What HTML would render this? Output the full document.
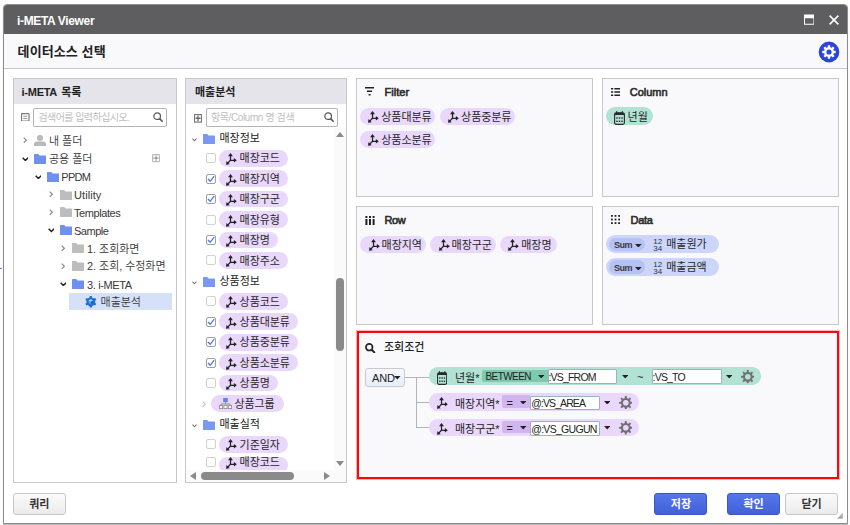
<!DOCTYPE html>
<html lang="ko"><head><meta charset="utf-8"><title>i-META Viewer</title>
<style>
html,body{margin:0;padding:0;background:#fff;}
body{width:850px;height:525px;position:relative;overflow:hidden;font-family:"Liberation Sans", "Noto Sans CJK KR", sans-serif;font-size:11px;color:#333;}
.ab{position:absolute;}
.t{position:absolute;white-space:nowrap;line-height:16px;height:16px;}
.k{letter-spacing:-0.05px;}
.l{letter-spacing:-0.5px;}
.lt{position:relative;top:0.4px;}
#frame{left:3px;top:4px;width:843px;height:518px;border:1px solid #8c8c8c;border-radius:4px 4px 0 0;background:#fff;box-shadow:0 1px 1px rgba(0,0,0,.3);overflow:hidden;}
#frame .tbg{position:absolute;left:0;top:0;width:843px;height:29px;background:#5e5e60;}
#frame .sbg{position:absolute;left:0;top:29px;width:843px;height:34px;background:#f9f9fb;border-bottom:1px solid #c6c6c6;}
#dlg{left:4px;top:5px;width:843px;height:518px;}
#tb{left:0;top:0;width:843px;height:29px;}
#sh{left:0;top:29px;width:843px;height:34px;}
.pn{border:1px solid #c8c8c8;background:#fff;box-sizing:border-box;}
.pn2{border:1px solid #c8c8c8;background:#f9f9fc;box-sizing:border-box;}
.ph{left:0;top:0;right:0;height:25px;background:#e4e4ea;}
.inp{border:1px solid #b4b4b4;border-radius:2px;background:#fff;box-sizing:border-box;}
.pill{position:absolute;border-radius:9px;height:17px;box-sizing:border-box;}
.pu{background:#e9d8fb;}
.gr{background:#b2e2d3;}
.bl{background:#ccd5fb;}
.cb{width:10px;height:10px;box-sizing:border-box;border:1px solid #d0d0d0;border-radius:2px;background:#fff;}
.cb.on{border-color:#a0a0a0;}
.btn{position:absolute;box-sizing:border-box;border-radius:3px;height:22px;line-height:21.4px;text-align:center;font-weight:bold;font-size:11px;letter-spacing:0;}
.bb{background:linear-gradient(#5577ea,#4360d8);border:1px solid #3a55c4;color:#fff;}
.bg{background:linear-gradient(#fbfbfb,#ebebeb);border:1px solid #c6c6c6;color:#333;}
.pt{font-weight:400;font-size:11px;color:#2c2c2c;-webkit-text-stroke:0.6px #2c2c2c;}
.ph .t{font-weight:bold;font-size:11px;color:#222;}
.ptxt{color:#262626;font-weight:400;}
</style></head><body>
<div class="ab" style="left:0;top:268px;width:2px;height:1px;background:#7a7af2"></div>
<div id="frame" class="ab"><div class="tbg"></div><div class="sbg"></div></div>
<div id="dlg" class="ab">
<div id="tb" class="ab"><div class="t" style="left:13px;top:7.5px;color:#fff;font-weight:bold;font-size:12px;letter-spacing:-0.35px">i-META Viewer</div>
<svg class="ab" style="left:800px;top:9.4px" width="10.4" height="11.2" viewBox="0 0 11 11"><path fill="#fff" fill-rule="evenodd" d="M0 0H11V11H0ZM1 4V10H10V4Z"/></svg>
<svg class="ab" style="left:825px;top:10px" width="10" height="10" viewBox="0 0 10 10"><path stroke="#fff" stroke-width="1.5" fill="none" d="M0.6 0.6L9.4 9.4M9.4 0.6L0.6 9.4"/></svg>
</div>
<div id="sh" class="ab"><div class="t k" style="left:13.6px;top:9.6px;font-size:13px;font-weight:bold;color:#222;letter-spacing:0.1px">데이터소스 선택</div>
<svg class="ab" style="left:813.5px;top:6.5px" width="22" height="22" viewBox="-0.5 -0.5 22 22"><circle cx="10.5" cy="10.5" r="11" fill="#fff"/><circle cx="10.5" cy="10.5" r="10.4" fill="#2a45d8"/><path fill="#fff" fill-rule="evenodd" d="M9.33 3.80L11.67 3.80L11.74 5.66L13.05 6.20L14.41 4.94L16.06 6.59L14.80 7.95L15.34 9.26L17.20 9.33L17.20 11.67L15.34 11.74L14.80 13.05L16.06 14.41L14.41 16.06L13.05 14.80L11.74 15.34L11.67 17.20L9.33 17.20L9.26 15.34L7.95 14.80L6.59 16.06L4.94 14.41L6.20 13.05L5.66 11.74L3.80 11.67L3.80 9.33L5.66 9.26L6.20 7.95L4.94 6.59L6.59 4.94L7.95 6.20L9.26 5.66ZM7.90 10.50a2.6 2.6 0 1 0 5.2 0a2.6 2.6 0 1 0 -5.2 0Z"/></svg>
</div>

<div class="ab pn" style="left:9px;top:73px;width:164px;height:405px">
<div class="ab ph"><div class="t" style="left:7.6px;top:5.2px"><span style="letter-spacing:-0.28px">i-META</span></div><div class="t" style="left:47.2px;top:5.2px">목록</div></div>
<svg class="ab" style="left:7.2px;top:33.5px" width="8.6" height="8.6" viewBox="0 0 9 9"><rect x="0.6" y="0.6" width="7.8" height="7.8" rx="0.5" fill="#fff" stroke="#7a7a7a" stroke-width="1.2"/><path stroke="#808080" stroke-width="0.9" d="M2.4 3.4H6.6M2.4 5.8H6.6" fill="none"/></svg>
<div class="ab inp" style="left:19px;top:29px;width:134px;height:19px"><div class="t k" style="left:4.4px;top:1px;font-size:10px;color:#bdbdbd;letter-spacing:-0.55px">검색어를 입력하십시오.</div><svg class="ab" style="left:119px;top:3.4px" width="10.4" height="10.4" viewBox="0 0 11 11"><circle cx="4.4" cy="4.4" r="3.5" fill="none" stroke="#555" stroke-width="1.3"/><path d="M7 7L10.2 10.2" stroke="#555" stroke-width="1.6"/></svg></div>
<div class="ab" style="left:55px;top:214.4px;width:102.6px;height:16.6px;background:#d6e0f8"></div>
<svg class="ab" style="left:9px;top:58.4px" width="4.2" height="6.5" viewBox="0 0 5 8"><path fill="none" stroke="#8c8c8c" stroke-width="1.45" d="M0.8 0.8L4 4L0.8 7.2"/></svg>
<svg class="ab" style="left:20px;top:55.6px" width="12" height="11" viewBox="0 0 12 11"><circle cx="6" cy="3" r="3" fill="#b9b9b9"/><path d="M0 11V9.2Q0 6.6 3.2 6.6H8.8Q12 6.6 12 9.2V11Z" fill="#b9b9b9"/></svg>
<div class="t k" style="left:35px;top:54.1px;color:#383838;font-weight:350">내 폴더</div>
<svg class="ab" style="left:7.6px;top:77.7px" width="6.8" height="4.3" viewBox="0 0 8 5"><path fill="none" stroke="#222" stroke-width="1.8" d="M0.8 0.8L4 4L7.2 0.8"/></svg>
<svg class="ab" style="left:19.6px;top:74.7px" width="12" height="10" viewBox="0 0 12 10"><path fill="#7090f0" d="M0 0.6Q0 0 0.6 0H4.2L5.6 1.6H11.4Q12 1.6 12 2.2V9.4Q12 10 11.4 10H0.6Q0 10 0 9.4Z"/></svg>
<div class="t k" style="left:35px;top:72.0px;color:#383838;font-weight:350">공용 폴더</div>
<svg class="ab" style="left:20.6px;top:95.6px" width="6.8" height="4.3" viewBox="0 0 8 5"><path fill="none" stroke="#222" stroke-width="1.8" d="M0.8 0.8L4 4L7.2 0.8"/></svg>
<svg class="ab" style="left:32.6px;top:92.6px" width="12" height="10" viewBox="0 0 12 10"><path fill="#7090f0" d="M0 0.6Q0 0 0.6 0H4.2L5.6 1.6H11.4Q12 1.6 12 2.2V9.4Q12 10 11.4 10H0.6Q0 10 0 9.4Z"/></svg>
<div class="t k" style="left:47.3px;top:89.9px;color:#383838;font-weight:350"><span class="lt"><span style="letter-spacing:-0.75px">PPDM</span></span></div>
<svg class="ab" style="left:34.5px;top:112.1px" width="4.2" height="6.5" viewBox="0 0 5 8"><path fill="none" stroke="#8c8c8c" stroke-width="1.45" d="M0.8 0.8L4 4L0.8 7.2"/></svg>
<svg class="ab" style="left:45.6px;top:110.5px" width="12" height="10" viewBox="0 0 12 10"><path fill="#bdbdbd" d="M0 0.6Q0 0 0.6 0H4.2L5.6 1.6H11.4Q12 1.6 12 2.2V9.4Q12 10 11.4 10H0.6Q0 10 0 9.4Z"/></svg>
<div class="t k" style="left:60px;top:107.8px;color:#383838;font-weight:350"><span class="lt"><span style="letter-spacing:0.07px">Utility</span></span></div>
<svg class="ab" style="left:34.5px;top:130.0px" width="4.2" height="6.5" viewBox="0 0 5 8"><path fill="none" stroke="#8c8c8c" stroke-width="1.45" d="M0.8 0.8L4 4L0.8 7.2"/></svg>
<svg class="ab" style="left:45.6px;top:128.4px" width="12" height="10" viewBox="0 0 12 10"><path fill="#bdbdbd" d="M0 0.6Q0 0 0.6 0H4.2L5.6 1.6H11.4Q12 1.6 12 2.2V9.4Q12 10 11.4 10H0.6Q0 10 0 9.4Z"/></svg>
<div class="t k" style="left:60px;top:125.7px;color:#383838;font-weight:350"><span class="lt"><span style="letter-spacing:-0.42px">Templates</span></span></div>
<svg class="ab" style="left:33.6px;top:149.3px" width="6.8" height="4.3" viewBox="0 0 8 5"><path fill="none" stroke="#222" stroke-width="1.8" d="M0.8 0.8L4 4L7.2 0.8"/></svg>
<svg class="ab" style="left:45.6px;top:146.3px" width="12" height="10" viewBox="0 0 12 10"><path fill="#7090f0" d="M0 0.6Q0 0 0.6 0H4.2L5.6 1.6H11.4Q12 1.6 12 2.2V9.4Q12 10 11.4 10H0.6Q0 10 0 9.4Z"/></svg>
<div class="t k" style="left:60px;top:143.6px;color:#383838;font-weight:350"><span class="lt"><span style="letter-spacing:-0.48px">Sample</span></span></div>
<svg class="ab" style="left:47px;top:165.8px" width="4.2" height="6.5" viewBox="0 0 5 8"><path fill="none" stroke="#8c8c8c" stroke-width="1.45" d="M0.8 0.8L4 4L0.8 7.2"/></svg>
<svg class="ab" style="left:58.2px;top:164.2px" width="12" height="10" viewBox="0 0 12 10"><path fill="#bdbdbd" d="M0 0.6Q0 0 0.6 0H4.2L5.6 1.6H11.4Q12 1.6 12 2.2V9.4Q12 10 11.4 10H0.6Q0 10 0 9.4Z"/></svg>
<div class="t k" style="left:73px;top:161.5px;color:#383838;font-weight:350">1. 조회화면</div>
<svg class="ab" style="left:47px;top:183.7px" width="4.2" height="6.5" viewBox="0 0 5 8"><path fill="none" stroke="#8c8c8c" stroke-width="1.45" d="M0.8 0.8L4 4L0.8 7.2"/></svg>
<svg class="ab" style="left:58.2px;top:182.1px" width="12" height="10" viewBox="0 0 12 10"><path fill="#bdbdbd" d="M0 0.6Q0 0 0.6 0H4.2L5.6 1.6H11.4Q12 1.6 12 2.2V9.4Q12 10 11.4 10H0.6Q0 10 0 9.4Z"/></svg>
<div class="t k" style="left:73px;top:179.4px;color:#383838;font-weight:350">2. 조회, 수정화면</div>
<svg class="ab" style="left:45.6px;top:203.0px" width="6.8" height="4.3" viewBox="0 0 8 5"><path fill="none" stroke="#222" stroke-width="1.8" d="M0.8 0.8L4 4L7.2 0.8"/></svg>
<svg class="ab" style="left:58.2px;top:200.0px" width="12" height="10" viewBox="0 0 12 10"><path fill="#7090f0" d="M0 0.6Q0 0 0.6 0H4.2L5.6 1.6H11.4Q12 1.6 12 2.2V9.4Q12 10 11.4 10H0.6Q0 10 0 9.4Z"/></svg>
<div class="t k" style="left:73px;top:197.3px;color:#383838;font-weight:350"><span class="lt"><span style="letter-spacing:-0.36px">3. i-META</span></span></div>
<svg class="ab" style="left:138px;top:75.4px" width="8.2" height="8.2" viewBox="0 0 8 8"><rect x="0.6" y="0.6" width="6.8" height="6.8" rx="0.6" fill="#fff" stroke="#bcbcbc" stroke-width="1.2"/><path stroke="#b4b4b4" stroke-width="1.2" d="M4 0.6V7.4M0.6 4H7.4" fill="none"/><rect x="3.2" y="3.2" width="1.6" height="1.6" fill="#8a8a8a"/></svg>
<svg class="ab" style="left:71px;top:217px" width="11.6" height="11.6" viewBox="0 0 12 12"><path fill="#1f70d2" fill-rule="evenodd" d="M4.94 0.09L7.06 0.09L7.31 1.49L9.25 2.61L10.58 2.13L11.65 3.97L10.56 4.88L10.56 7.12L11.65 8.03L10.58 9.87L9.25 9.39L7.31 10.51L7.06 11.91L4.94 11.91L4.69 10.51L2.75 9.39L1.42 9.87L0.35 8.03L1.44 7.12L1.44 4.88L0.35 3.97L1.42 2.13L2.75 2.61L4.69 1.49Z"/><path fill="#4aa3ee" d="M6 3.4L8.3 4.7V7.3L6 8.6L3.7 7.3V4.7Z"/><path fill="#a8dcfb" d="M6 3.4L8.3 4.7L6 6L3.7 4.7Z"/><path fill="#1b5fbd" d="M6 6L8.3 4.7V7.3L6 8.6Z"/></svg>
<div class="t k" style="left:86.6px;top:215.2px;color:#383838;font-weight:350">매출분석</div>
</div>
<div class="ab pn" style="left:181px;top:73px;width:162px;height:405px;overflow:hidden">
<div class="ab ph"><div class="t k" style="left:9px;top:5.2px">매출분석</div></div>
<svg class="ab" style="left:7.9px;top:35.1px" width="8" height="8.7" viewBox="0 0 9 9" preserveAspectRatio="none"><rect x="0.6" y="0.6" width="7.8" height="7.8" fill="#fff" stroke="#777" stroke-width="1.2"/><path stroke="#6a6a6a" stroke-width="1.5" d="M4.5 1.6V7.4M1.6 4.5H7.4" fill="none"/></svg>
<div class="ab inp" style="left:20px;top:29px;width:132px;height:19px"><div class="t" style="left:4px;top:1px;font-size:10px;color:#c0c0c0;letter-spacing:-0.4px">항목/Column 명 검색</div><svg class="ab" style="left:116.8px;top:3.4px" width="10.4" height="10.4" viewBox="0 0 11 11"><circle cx="4.4" cy="4.4" r="3.5" fill="none" stroke="#555" stroke-width="1.3"/><path d="M7 7L10.2 10.2" stroke="#555" stroke-width="1.6"/></svg></div>
<div class="ab" style="left:147.5px;top:49px;width:13px;height:342px;background:#fafafa"></div>
<div class="ab" style="left:0;top:390.5px;width:160px;height:13.5px;background:#fafafa"></div>
<div class="ab" style="left:0;top:49px;width:147.5px;height:341.5px;overflow:hidden">
<svg class="ab" style="left:6.2px;top:9.5px" width="5" height="4" viewBox="0 0 5 4"><path fill="none" stroke="#777" stroke-width="1.1" d="M0.5 0.6L2.5 2.8L4.5 0.6"/></svg>
<svg class="ab" style="left:17px;top:5.5px" width="12" height="10" viewBox="0 0 12 10"><path fill="#7a98f2" d="M0 0.6Q0 0 0.6 0H4.2L5.6 1.6H11.4Q12 1.6 12 2.2V9.4Q12 10 11.4 10H0.6Q0 10 0 9.4Z"/></svg>
<div class="t k" style="left:33.5px;top:1.5px;font-size:11px;color:#222;letter-spacing:-0.05px">매장정보</div>
<div class="ab cb" style="left:20px;top:25.15px"></div>
<div class="pill pu" style="left:33px;top:21.75px;width:69px;height:16.8px"></div>
<svg class="ab" style="left:39.6px;top:25.15px" width="11" height="12" viewBox="0 0 11 12"><g fill="none" stroke="#222" stroke-width="1.25"><path d="M4.5 1.5V7.3H9.3M4.5 7.3L1.2 10.6"/></g><g fill="#222"><path d="M4.5 0L6.9 3.2H2.1Z"/><path d="M10.8 7.3L7.9 9.5V5.1Z"/><path d="M0 11.8L0.5 8.1L3.7 11.3Z"/></g></svg>
<div class="t k ptxt" style="left:53.6px;top:22.35px">매장코드</div>
<div class="ab cb on" style="left:20px;top:45.6px"><svg width="8" height="8" viewBox="0 0 8 8" style="position:absolute;left:0px;top:0px"><path fill="none" stroke="#4f73f5" stroke-width="1.3" d="M1 4L3.2 6.3L7.2 1.2"/></svg></div>
<div class="pill pu" style="left:33px;top:42.2px;width:69px;height:16.8px"></div>
<svg class="ab" style="left:39.6px;top:45.6px" width="11" height="12" viewBox="0 0 11 12"><g fill="none" stroke="#222" stroke-width="1.25"><path d="M4.5 1.5V7.3H9.3M4.5 7.3L1.2 10.6"/></g><g fill="#222"><path d="M4.5 0L6.9 3.2H2.1Z"/><path d="M10.8 7.3L7.9 9.5V5.1Z"/><path d="M0 11.8L0.5 8.1L3.7 11.3Z"/></g></svg>
<div class="t k ptxt" style="left:53.6px;top:42.8px">매장지역</div>
<div class="ab cb on" style="left:20px;top:66.05px"><svg width="8" height="8" viewBox="0 0 8 8" style="position:absolute;left:0px;top:0px"><path fill="none" stroke="#4f73f5" stroke-width="1.3" d="M1 4L3.2 6.3L7.2 1.2"/></svg></div>
<div class="pill pu" style="left:33px;top:62.65px;width:69px;height:16.8px"></div>
<svg class="ab" style="left:39.6px;top:66.05px" width="11" height="12" viewBox="0 0 11 12"><g fill="none" stroke="#222" stroke-width="1.25"><path d="M4.5 1.5V7.3H9.3M4.5 7.3L1.2 10.6"/></g><g fill="#222"><path d="M4.5 0L6.9 3.2H2.1Z"/><path d="M10.8 7.3L7.9 9.5V5.1Z"/><path d="M0 11.8L0.5 8.1L3.7 11.3Z"/></g></svg>
<div class="t k ptxt" style="left:53.6px;top:63.25px">매장구군</div>
<div class="ab cb" style="left:20px;top:86.5px"></div>
<div class="pill pu" style="left:33px;top:83.1px;width:69px;height:16.8px"></div>
<svg class="ab" style="left:39.6px;top:86.5px" width="11" height="12" viewBox="0 0 11 12"><g fill="none" stroke="#222" stroke-width="1.25"><path d="M4.5 1.5V7.3H9.3M4.5 7.3L1.2 10.6"/></g><g fill="#222"><path d="M4.5 0L6.9 3.2H2.1Z"/><path d="M10.8 7.3L7.9 9.5V5.1Z"/><path d="M0 11.8L0.5 8.1L3.7 11.3Z"/></g></svg>
<div class="t k ptxt" style="left:53.6px;top:83.7px">매장유형</div>
<div class="ab cb on" style="left:20px;top:106.95px"><svg width="8" height="8" viewBox="0 0 8 8" style="position:absolute;left:0px;top:0px"><path fill="none" stroke="#4f73f5" stroke-width="1.3" d="M1 4L3.2 6.3L7.2 1.2"/></svg></div>
<div class="pill pu" style="left:33px;top:103.55px;width:59px;height:16.8px"></div>
<svg class="ab" style="left:39.6px;top:106.95px" width="11" height="12" viewBox="0 0 11 12"><g fill="none" stroke="#222" stroke-width="1.25"><path d="M4.5 1.5V7.3H9.3M4.5 7.3L1.2 10.6"/></g><g fill="#222"><path d="M4.5 0L6.9 3.2H2.1Z"/><path d="M10.8 7.3L7.9 9.5V5.1Z"/><path d="M0 11.8L0.5 8.1L3.7 11.3Z"/></g></svg>
<div class="t k ptxt" style="left:53.6px;top:104.15px">매장명</div>
<div class="ab cb" style="left:20px;top:127.4px"></div>
<div class="pill pu" style="left:33px;top:124.0px;width:69px;height:16.8px"></div>
<svg class="ab" style="left:39.6px;top:127.4px" width="11" height="12" viewBox="0 0 11 12"><g fill="none" stroke="#222" stroke-width="1.25"><path d="M4.5 1.5V7.3H9.3M4.5 7.3L1.2 10.6"/></g><g fill="#222"><path d="M4.5 0L6.9 3.2H2.1Z"/><path d="M10.8 7.3L7.9 9.5V5.1Z"/><path d="M0 11.8L0.5 8.1L3.7 11.3Z"/></g></svg>
<div class="t k ptxt" style="left:53.6px;top:124.6px">매장주소</div>
<svg class="ab" style="left:6.2px;top:152.65px" width="5" height="4" viewBox="0 0 5 4"><path fill="none" stroke="#777" stroke-width="1.1" d="M0.5 0.6L2.5 2.8L4.5 0.6"/></svg>
<svg class="ab" style="left:17px;top:148.65px" width="12" height="10" viewBox="0 0 12 10"><path fill="#7a98f2" d="M0 0.6Q0 0 0.6 0H4.2L5.6 1.6H11.4Q12 1.6 12 2.2V9.4Q12 10 11.4 10H0.6Q0 10 0 9.4Z"/></svg>
<div class="t k" style="left:33.5px;top:144.65px;font-size:11px;color:#222;letter-spacing:-0.05px">상품정보</div>
<div class="ab cb" style="left:20px;top:168.3px"></div>
<div class="pill pu" style="left:33px;top:164.9px;width:69px;height:16.8px"></div>
<svg class="ab" style="left:39.6px;top:168.3px" width="11" height="12" viewBox="0 0 11 12"><g fill="none" stroke="#222" stroke-width="1.25"><path d="M4.5 1.5V7.3H9.3M4.5 7.3L1.2 10.6"/></g><g fill="#222"><path d="M4.5 0L6.9 3.2H2.1Z"/><path d="M10.8 7.3L7.9 9.5V5.1Z"/><path d="M0 11.8L0.5 8.1L3.7 11.3Z"/></g></svg>
<div class="t k ptxt" style="left:53.6px;top:165.5px">상품코드</div>
<div class="ab cb on" style="left:20px;top:188.75px"><svg width="8" height="8" viewBox="0 0 8 8" style="position:absolute;left:0px;top:0px"><path fill="none" stroke="#4f73f5" stroke-width="1.3" d="M1 4L3.2 6.3L7.2 1.2"/></svg></div>
<div class="pill pu" style="left:33px;top:185.35px;width:79px;height:16.8px"></div>
<svg class="ab" style="left:39.6px;top:188.75px" width="11" height="12" viewBox="0 0 11 12"><g fill="none" stroke="#222" stroke-width="1.25"><path d="M4.5 1.5V7.3H9.3M4.5 7.3L1.2 10.6"/></g><g fill="#222"><path d="M4.5 0L6.9 3.2H2.1Z"/><path d="M10.8 7.3L7.9 9.5V5.1Z"/><path d="M0 11.8L0.5 8.1L3.7 11.3Z"/></g></svg>
<div class="t k ptxt" style="left:53.6px;top:185.95px">상품대분류</div>
<div class="ab cb on" style="left:20px;top:209.2px"><svg width="8" height="8" viewBox="0 0 8 8" style="position:absolute;left:0px;top:0px"><path fill="none" stroke="#4f73f5" stroke-width="1.3" d="M1 4L3.2 6.3L7.2 1.2"/></svg></div>
<div class="pill pu" style="left:33px;top:205.8px;width:79px;height:16.8px"></div>
<svg class="ab" style="left:39.6px;top:209.2px" width="11" height="12" viewBox="0 0 11 12"><g fill="none" stroke="#222" stroke-width="1.25"><path d="M4.5 1.5V7.3H9.3M4.5 7.3L1.2 10.6"/></g><g fill="#222"><path d="M4.5 0L6.9 3.2H2.1Z"/><path d="M10.8 7.3L7.9 9.5V5.1Z"/><path d="M0 11.8L0.5 8.1L3.7 11.3Z"/></g></svg>
<div class="t k ptxt" style="left:53.6px;top:206.4px">상품중분류</div>
<div class="ab cb on" style="left:20px;top:229.65px"><svg width="8" height="8" viewBox="0 0 8 8" style="position:absolute;left:0px;top:0px"><path fill="none" stroke="#4f73f5" stroke-width="1.3" d="M1 4L3.2 6.3L7.2 1.2"/></svg></div>
<div class="pill pu" style="left:33px;top:226.25px;width:79px;height:16.8px"></div>
<svg class="ab" style="left:39.6px;top:229.65px" width="11" height="12" viewBox="0 0 11 12"><g fill="none" stroke="#222" stroke-width="1.25"><path d="M4.5 1.5V7.3H9.3M4.5 7.3L1.2 10.6"/></g><g fill="#222"><path d="M4.5 0L6.9 3.2H2.1Z"/><path d="M10.8 7.3L7.9 9.5V5.1Z"/><path d="M0 11.8L0.5 8.1L3.7 11.3Z"/></g></svg>
<div class="t k ptxt" style="left:53.6px;top:226.85px">상품소분류</div>
<div class="ab cb" style="left:20px;top:250.1px"></div>
<div class="pill pu" style="left:33px;top:246.7px;width:59px;height:16.8px"></div>
<svg class="ab" style="left:39.6px;top:250.1px" width="11" height="12" viewBox="0 0 11 12"><g fill="none" stroke="#222" stroke-width="1.25"><path d="M4.5 1.5V7.3H9.3M4.5 7.3L1.2 10.6"/></g><g fill="#222"><path d="M4.5 0L6.9 3.2H2.1Z"/><path d="M10.8 7.3L7.9 9.5V5.1Z"/><path d="M0 11.8L0.5 8.1L3.7 11.3Z"/></g></svg>
<div class="t k ptxt" style="left:53.6px;top:247.3px">상품명</div>
<svg class="ab" style="left:15.7px;top:272.55px" width="4.2" height="6.5" viewBox="0 0 5 8"><path fill="none" stroke="#bbb" stroke-width="1.3" d="M0.8 0.8L4 4L0.8 7.2"/></svg>
<div class="pill pu" style="left:24.8px;top:266.95px;width:72.8px;height:16.8px"></div>
<svg class="ab" style="left:32.6px;top:270.35px" width="13" height="11" viewBox="0 0 13 11"><rect x="4.2" y="0" width="4.6" height="4.2" fill="#5b86ee"/><path d="M6.5 4.2V6M2 8V6H11V8" stroke="#888" fill="none" stroke-width="0.9"/><rect x="0.4" y="7.6" width="3.2" height="3" fill="#fff" stroke="#888" stroke-width="0.8"/><rect x="4.9" y="7.6" width="3.2" height="3" fill="#fff" stroke="#888" stroke-width="0.8"/><rect x="9.4" y="7.6" width="3.2" height="3" fill="#fff" stroke="#888" stroke-width="0.8"/></svg>
<div class="t k ptxt" style="left:48.4px;top:267.55px">상품그룹</div>
<svg class="ab" style="left:6.2px;top:295.8px" width="5" height="4" viewBox="0 0 5 4"><path fill="none" stroke="#777" stroke-width="1.1" d="M0.5 0.6L2.5 2.8L4.5 0.6"/></svg>
<svg class="ab" style="left:17px;top:291.8px" width="12" height="10" viewBox="0 0 12 10"><path fill="#7a98f2" d="M0 0.6Q0 0 0.6 0H4.2L5.6 1.6H11.4Q12 1.6 12 2.2V9.4Q12 10 11.4 10H0.6Q0 10 0 9.4Z"/></svg>
<div class="t k" style="left:33.5px;top:287.8px;font-size:11px;color:#222;letter-spacing:-0.05px">매출실적</div>
<div class="ab cb" style="left:20px;top:311.45px"></div>
<div class="pill pu" style="left:33px;top:308.05px;width:69px;height:16.8px"></div>
<svg class="ab" style="left:39.6px;top:311.45px" width="11" height="12" viewBox="0 0 11 12"><g fill="none" stroke="#222" stroke-width="1.25"><path d="M4.5 1.5V7.3H9.3M4.5 7.3L1.2 10.6"/></g><g fill="#222"><path d="M4.5 0L6.9 3.2H2.1Z"/><path d="M10.8 7.3L7.9 9.5V5.1Z"/><path d="M0 11.8L0.5 8.1L3.7 11.3Z"/></g></svg>
<div class="t k ptxt" style="left:53.6px;top:308.65px">기준일자</div>
<div class="ab cb" style="left:20px;top:328.9px"></div>
<div class="pill pu" style="left:33px;top:328.5px;width:69px;height:16.8px"></div>
<svg class="ab" style="left:39.6px;top:328.9px" width="11" height="12" viewBox="0 0 11 12"><g fill="none" stroke="#222" stroke-width="1.25"><path d="M4.5 1.5V7.3H9.3M4.5 7.3L1.2 10.6"/></g><g fill="#222"><path d="M4.5 0L6.9 3.2H2.1Z"/><path d="M10.8 7.3L7.9 9.5V5.1Z"/><path d="M0 11.8L0.5 8.1L3.7 11.3Z"/></g></svg>
<div class="t k ptxt" style="left:53.6px;top:326.1px">매장코드</div>
</div>
<svg class="ab" style="left:150.4px;top:53px" width="8" height="5" viewBox="0 0 8 5"><path fill="#8a8a8a" d="M4 0L8 5H0Z"/></svg>
<div class="ab" style="left:150.4px;top:199px;width:7.6px;height:73px;border-radius:4px;background:#8a8a8a"></div>
<svg class="ab" style="left:150.4px;top:381.5px" width="8" height="5" viewBox="0 0 8 5"><path fill="#8a8a8a" d="M0 0H8L4 5Z"/></svg>
<svg class="ab" style="left:3.8px;top:393.2px" width="6" height="8" viewBox="0 0 6 8"><path fill="#8a8a8a" d="M6 0V8L0 4Z"/></svg>
<div class="ab" style="left:15px;top:393.4px;width:92.6px;height:7.4px;border-radius:4px;background:#8a8a8a"></div>
<svg class="ab" style="left:138.2px;top:393.2px" width="6" height="8" viewBox="0 0 6 8"><path fill="#8a8a8a" d="M0 0V8L6 4Z"/></svg>
</div>
<div class="ab pn2" style="left:352px;top:73px;width:237px;height:119px">
<svg class="ab" style="left:7.9px;top:7.9px" width="9" height="9" viewBox="0 0 9 9"><path stroke="#222" stroke-width="1.6" fill="none" d="M0 0.8H9M1.9 4.2H7.1M3.6 7.8H5.6"/></svg>
<div class="t pt" style="left:27.4px;top:4.5px"><span style="letter-spacing:0.07px">Filter</span></div>
<div class="pill pu" style="left:3px;top:28.6px;width:75.3px;height:17.8px"></div><svg class="ab" style="left:11.2px;top:32.3px" width="11" height="12" viewBox="0 0 11 12"><g fill="none" stroke="#222" stroke-width="1.25"><path d="M4.5 1.5V7.3H9.3M4.5 7.3L1.2 10.6"/></g><g fill="#222"><path d="M4.5 0L6.9 3.2H2.1Z"/><path d="M10.8 7.3L7.9 9.5V5.1Z"/><path d="M0 11.8L0.5 8.1L3.7 11.3Z"/></g></svg><div class="t k ptxt" style="left:24.3px;top:29.7px">상품대분류</div>
<div class="pill pu" style="left:82.8px;top:28.6px;width:75.3px;height:17.8px"></div><svg class="ab" style="left:91.0px;top:32.3px" width="11" height="12" viewBox="0 0 11 12"><g fill="none" stroke="#222" stroke-width="1.25"><path d="M4.5 1.5V7.3H9.3M4.5 7.3L1.2 10.6"/></g><g fill="#222"><path d="M4.5 0L6.9 3.2H2.1Z"/><path d="M10.8 7.3L7.9 9.5V5.1Z"/><path d="M0 11.8L0.5 8.1L3.7 11.3Z"/></g></svg><div class="t k ptxt" style="left:104.1px;top:29.7px">상품중분류</div>
<div class="pill pu" style="left:3px;top:51.5px;width:75.3px;height:17.8px"></div><svg class="ab" style="left:11.2px;top:55.2px" width="11" height="12" viewBox="0 0 11 12"><g fill="none" stroke="#222" stroke-width="1.25"><path d="M4.5 1.5V7.3H9.3M4.5 7.3L1.2 10.6"/></g><g fill="#222"><path d="M4.5 0L6.9 3.2H2.1Z"/><path d="M10.8 7.3L7.9 9.5V5.1Z"/><path d="M0 11.8L0.5 8.1L3.7 11.3Z"/></g></svg><div class="t k ptxt" style="left:24.3px;top:52.6px">상품소분류</div>
</div>
<div class="ab pn2" style="left:598px;top:73px;width:237px;height:119px">
<svg class="ab" style="left:7.8px;top:9px" width="9" height="8" viewBox="0 0 9 8"><path stroke="#222" stroke-width="1.6" fill="none" d="M0 0.8H2.2M3.4 0.8H9M0 4H2.2M3.4 4H9M0 7.2H2.2M3.4 7.2H9"/></svg>
<div class="t pt" style="left:26.8px;top:4.7px"><span style="letter-spacing:-0.02px">Column</span></div>
<div class="pill gr" style="left:3px;top:28.4px;width:46.9px;height:18px"></div>
<svg class="ab" style="left:11.1px;top:31.8px" width="11" height="14" preserveAspectRatio="none" viewBox="0 0 11 14"><rect x="0.6" y="1.7" width="9.8" height="11.7" rx="1.6" fill="none" stroke="#2a2a2a" stroke-width="1.1"/><path fill="#2a2a2a" d="M0.6 4.1V3.2Q0.6 1.7 2.2 1.7H8.8Q10.4 1.7 10.4 3.2V4.1Z"/><g fill="#2a2a2a"><rect x="2" y="0.2" width="1.2" height="2"/><rect x="7.8" y="0.2" width="1.2" height="2"/><rect x="2.3" y="6.3" width="1.4" height="1.4"/><rect x="4.8" y="6.3" width="1.4" height="1.4"/><rect x="7.3" y="6.3" width="1.4" height="1.4"/><rect x="2.3" y="9.6" width="1.4" height="1.4"/><rect x="4.8" y="9.6" width="1.4" height="1.4"/><rect x="7.3" y="9.6" width="1.4" height="1.4"/></g></svg>
<div class="t k ptxt" style="left:24.6px;top:29.7px">년월</div>
</div>
<div class="ab pn2" style="left:352px;top:200.6px;width:237px;height:119px">
<svg class="ab" style="left:7.7px;top:9.0px" width="10" height="9" viewBox="0 0 10 9"><g fill="#222"><rect x="0.4" y="0" width="2" height="2"/><rect x="4" y="0" width="2" height="2"/><rect x="7.6" y="0" width="2" height="2"/><rect x="0.4" y="3" width="2" height="6"/><rect x="4" y="3" width="2" height="6"/><rect x="7.6" y="3" width="2" height="6"/></g></svg>
<div class="t pt" style="left:27.6px;top:5.4px"><span style="letter-spacing:-0.44px">Row</span></div>
<div class="pill pu" style="left:3.3px;top:29.0px;width:65.3px;height:17.8px"></div><svg class="ab" style="left:11.5px;top:32.7px" width="11" height="12" viewBox="0 0 11 12"><g fill="none" stroke="#222" stroke-width="1.25"><path d="M4.5 1.5V7.3H9.3M4.5 7.3L1.2 10.6"/></g><g fill="#222"><path d="M4.5 0L6.9 3.2H2.1Z"/><path d="M10.8 7.3L7.9 9.5V5.1Z"/><path d="M0 11.8L0.5 8.1L3.7 11.3Z"/></g></svg><div class="t k ptxt" style="left:24.6px;top:30.1px">매장지역</div>
<div class="pill pu" style="left:73.3px;top:29.0px;width:65.3px;height:17.8px"></div><svg class="ab" style="left:81.5px;top:32.7px" width="11" height="12" viewBox="0 0 11 12"><g fill="none" stroke="#222" stroke-width="1.25"><path d="M4.5 1.5V7.3H9.3M4.5 7.3L1.2 10.6"/></g><g fill="#222"><path d="M4.5 0L6.9 3.2H2.1Z"/><path d="M10.8 7.3L7.9 9.5V5.1Z"/><path d="M0 11.8L0.5 8.1L3.7 11.3Z"/></g></svg><div class="t k ptxt" style="left:94.6px;top:30.1px">매장구군</div>
<div class="pill pu" style="left:143px;top:29.0px;width:56.5px;height:17.8px"></div><svg class="ab" style="left:151.2px;top:32.7px" width="11" height="12" viewBox="0 0 11 12"><g fill="none" stroke="#222" stroke-width="1.25"><path d="M4.5 1.5V7.3H9.3M4.5 7.3L1.2 10.6"/></g><g fill="#222"><path d="M4.5 0L6.9 3.2H2.1Z"/><path d="M10.8 7.3L7.9 9.5V5.1Z"/><path d="M0 11.8L0.5 8.1L3.7 11.3Z"/></g></svg><div class="t k ptxt" style="left:164.3px;top:30.1px">매장명</div>
</div>
<div class="ab pn2" style="left:598px;top:200.6px;width:237px;height:119px">
<svg class="ab" style="left:7.8px;top:8.6px" width="9" height="9" viewBox="0 0 9 9"><g fill="#222"><rect x="0" y="0" width="1.8" height="1.8"/><rect x="3.6" y="0" width="1.8" height="1.8"/><rect x="7.2" y="0" width="1.8" height="1.8"/><rect x="0" y="3.6" width="1.8" height="1.8"/><rect x="3.6" y="3.6" width="1.8" height="1.8"/><rect x="7.2" y="3.6" width="1.8" height="1.8"/><rect x="0" y="7.2" width="1.8" height="1.8"/><rect x="3.6" y="7.2" width="1.8" height="1.8"/><rect x="7.2" y="7.2" width="1.8" height="1.8"/></g></svg>
<div class="t pt" style="left:27.6px;top:5.1px"><span style="letter-spacing:-0.36px">Data</span></div>
<div class="pill bl" style="left:3px;top:28.7px;width:112.6px;height:17.8px"></div>
<div class="pill" style="left:5.8px;top:31.0px;width:35.8px;height:13.6px;border-radius:7px;background:#b7c2f4"></div>
<div class="t" style="left:11px;top:30.4px;font-size:9px;font-weight:bold;color:#3a3a3a"><span style="letter-spacing:-0.44px">Sum</span></div>
<svg class="ab" style="left:32.3px;top:37.1px" width="6.7" height="3.6" viewBox="0 0 6.7 3.6"><path fill="#222" d="M0 0H6.7L3.35 3.6Z"/></svg>
<div class="t" style="left:50.2px;top:32.5px;font-size:8px;line-height:6.7px;height:14px;color:#333;letter-spacing:0">12<br>34</div>
<div class="t k ptxt" style="left:63.3px;top:29.8px">매출원가</div>
<div class="pill bl" style="left:3px;top:51.6px;width:112.6px;height:17.8px"></div>
<div class="pill" style="left:5.8px;top:53.9px;width:35.8px;height:13.6px;border-radius:7px;background:#b7c2f4"></div>
<div class="t" style="left:11px;top:53.3px;font-size:9px;font-weight:bold;color:#3a3a3a"><span style="letter-spacing:-0.44px">Sum</span></div>
<svg class="ab" style="left:32.3px;top:60.0px" width="6.7" height="3.6" viewBox="0 0 6.7 3.6"><path fill="#222" d="M0 0H6.7L3.35 3.6Z"/></svg>
<div class="t" style="left:50.2px;top:55.4px;font-size:8px;line-height:6.7px;height:14px;color:#333;letter-spacing:0">12<br>34</div>
<div class="t k ptxt" style="left:63.3px;top:52.7px">매출금액</div>
</div>
<div class="ab" style="left:353px;top:326px;width:482px;height:148px;box-sizing:border-box;border:2px solid #fb0808;outline:1px solid rgba(251,8,8,.3);background:#f9f9fc">
<svg class="ab" style="left:6.2px;top:9.5px" width="10.6" height="10.6" viewBox="0 0 10 10"><circle cx="4" cy="4" r="3.1" fill="none" stroke="#222" stroke-width="1.6"/><path d="M6.3 6.3L9.3 9.3" stroke="#222" stroke-width="1.9"/></svg>
<div class="t k" style="left:25px;top:6.3px;letter-spacing:-0.05px;font-weight:500;color:#222">조회조건</div>
<div class="ab" style="left:46px;top:43.8px;width:25px;height:1px;background:#b4b4b4"></div>
<div class="ab" style="left:57.2px;top:43.8px;width:1px;height:51px;background:#b4b4b4"></div>
<div class="ab" style="left:57.2px;top:68.8px;width:14px;height:1px;background:#b4b4b4"></div>
<div class="ab" style="left:57.2px;top:94.3px;width:14px;height:1px;background:#b4b4b4"></div>
<div class="ab" style="left:6px;top:35.1px;width:40px;height:19px;box-sizing:border-box;border:1px solid #c8cad2;border-radius:3px;background:linear-gradient(#f7f9fe,#e6ecfa)"></div>
<div class="t" style="left:13px;top:36.9px;font-size:11px;color:#222"><span style="letter-spacing:-0.18px">AND</span></div>
<svg class="ab" style="left:35.2px;top:43.1px" width="6.6" height="3.6" viewBox="0 0 6.6 3.6"><path fill="#222" d="M0 0H6.6L3.3 3.6Z"/></svg>
<div class="pill gr" style="left:70.2px;top:34.4px;width:332px;height:17.4px;border-radius:8.7px"></div>
<svg class="ab" style="left:78px;top:38.2px" width="10.2" height="14" preserveAspectRatio="none" viewBox="0 0 11 14"><rect x="0.6" y="1.7" width="9.8" height="11.7" rx="1.6" fill="none" stroke="#2a2a2a" stroke-width="1.1"/><path fill="#2a2a2a" d="M0.6 4.1V3.2Q0.6 1.7 2.2 1.7H8.8Q10.4 1.7 10.4 3.2V4.1Z"/><g fill="#2a2a2a"><rect x="2" y="0.2" width="1.2" height="2"/><rect x="7.8" y="0.2" width="1.2" height="2"/><rect x="2.3" y="6.3" width="1.4" height="1.4"/><rect x="4.8" y="6.3" width="1.4" height="1.4"/><rect x="7.3" y="6.3" width="1.4" height="1.4"/><rect x="2.3" y="9.6" width="1.4" height="1.4"/><rect x="4.8" y="9.6" width="1.4" height="1.4"/><rect x="7.3" y="9.6" width="1.4" height="1.4"/></g></svg>
<div class="t k" style="left:96px;top:37.0px;color:#222">년월*</div>
<div class="ab" style="left:123px;top:36.8px;width:66.5px;height:12.3px;background:#7fcaae;border-radius:2px 0 0 2px"></div>
<div class="t" style="left:126.4px;top:36.4px;color:#222;font-size:10px"><span style="letter-spacing:-0.55px">BETWEEN</span></div>
<svg class="ab" style="left:179px;top:41.6px" width="6.4" height="3.4" viewBox="0 0 6.4 3.4"><path fill="#222" d="M0 0H6.4L3.2 3.4Z"/></svg>
<div class="ab inp" style="left:189.2px;top:36.3px;width:69.2px;height:15px;border-color:#9fb0c8;border-radius:1px"></div>
<div class="t" style="left:189.4px;top:36.3px;color:#222;font-size:10.5px"><span style="letter-spacing:-0.79px">:VS_FROM</span></div>
<svg class="ab" style="left:262.5px;top:42.2px" width="6.5" height="3.5" viewBox="0 0 6.5 3.5"><path fill="#222" d="M0 0H6.5L3.25 3.5Z"/></svg>
<div class="t" style="left:278px;top:36.4px;color:#222;font-size:11px">~</div>
<div class="ab inp" style="left:293.3px;top:36.3px;width:69.4px;height:15px;border-color:#9fb0c8;border-radius:1px"></div>
<div class="t" style="left:293.6px;top:36.3px;color:#222;font-size:10.5px"><span style="letter-spacing:-0.81px">:VS_TO</span></div>
<svg class="ab" style="left:366.6px;top:42.2px" width="6.5" height="3.5" viewBox="0 0 6.5 3.5"><path fill="#222" d="M0 0H6.5L3.25 3.5Z"/></svg>
<svg class="ab" style="left:381.6px;top:36.8px" width="13.6" height="13.6" viewBox="0 0 14 14"><path fill="#707070" fill-rule="evenodd" d="M6.07 0.06L7.93 0.06L8.07 2.01L9.77 2.72L11.25 1.44L12.56 2.75L11.28 4.23L11.99 5.93L13.94 6.07L13.94 7.93L11.99 8.07L11.28 9.77L12.56 11.25L11.25 12.56L9.77 11.28L8.07 11.99L7.93 13.94L6.07 13.94L5.93 11.99L4.23 11.28L2.75 12.56L1.44 11.25L2.72 9.77L2.01 8.07L0.06 7.93L0.06 6.07L2.01 5.93L2.72 4.23L1.44 2.75L2.75 1.44L4.23 2.72L5.93 2.01ZM4.10 7.00a2.9 2.9 0 1 0 5.8 0a2.9 2.9 0 1 0 -5.8 0Z"/></svg>
<div class="pill pu" style="left:70.2px;top:60.2px;width:210.2px;height:17.5px;border-radius:8.75px"></div>
<svg class="ab" style="left:77.8px;top:64.2px" width="11" height="12" viewBox="0 0 11 12"><g fill="none" stroke="#222" stroke-width="1.25"><path d="M4.5 1.5V7.3H9.3M4.5 7.3L1.2 10.6"/></g><g fill="#222"><path d="M4.5 0L6.9 3.2H2.1Z"/><path d="M10.8 7.3L7.9 9.5V5.1Z"/><path d="M0 11.8L0.5 8.1L3.7 11.3Z"/></g></svg>
<div class="t k" style="left:96px;top:62.8px;color:#222">매장지역*</div>
<div class="ab" style="left:143.3px;top:62.4px;width:28px;height:12.4px;background:#d3b5ee;border-radius:2px 0 0 2px"></div>
<div class="t" style="left:147.4px;top:61.5px;color:#222;font-size:11px">=</div>
<svg class="ab" style="left:160.6px;top:67.8px" width="6.4" height="3.5" viewBox="0 0 6.4 3.5"><path fill="#222" d="M0 0H6.4L3.2 3.5Z"/></svg>
<div class="ab inp" style="left:171px;top:62.6px;width:69.6px;height:14.8px;border-color:#9fb0c8;border-radius:1px"></div>
<div class="t" style="left:172.2px;top:62.2px;color:#222;font-size:10.5px"><span style="letter-spacing:-0.91px">@:VS_AREA</span></div>
<svg class="ab" style="left:244.8px;top:67.8px" width="6.5" height="3.6" viewBox="0 0 6.5 3.6"><path fill="#222" d="M0 0H6.5L3.25 3.6Z"/></svg>
<svg class="ab" style="left:259.6px;top:62.6px" width="13.6" height="13.6" viewBox="0 0 14 14"><path fill="#707070" fill-rule="evenodd" d="M6.07 0.06L7.93 0.06L8.07 2.01L9.77 2.72L11.25 1.44L12.56 2.75L11.28 4.23L11.99 5.93L13.94 6.07L13.94 7.93L11.99 8.07L11.28 9.77L12.56 11.25L11.25 12.56L9.77 11.28L8.07 11.99L7.93 13.94L6.07 13.94L5.93 11.99L4.23 11.28L2.75 12.56L1.44 11.25L2.72 9.77L2.01 8.07L0.06 7.93L0.06 6.07L2.01 5.93L2.72 4.23L1.44 2.75L2.75 1.44L4.23 2.72L5.93 2.01ZM4.10 7.00a2.9 2.9 0 1 0 5.8 0a2.9 2.9 0 1 0 -5.8 0Z"/></svg>
<div class="pill pu" style="left:70.2px;top:85.7px;width:210.2px;height:17.5px;border-radius:8.75px"></div>
<svg class="ab" style="left:77.8px;top:89.7px" width="11" height="12" viewBox="0 0 11 12"><g fill="none" stroke="#222" stroke-width="1.25"><path d="M4.5 1.5V7.3H9.3M4.5 7.3L1.2 10.6"/></g><g fill="#222"><path d="M4.5 0L6.9 3.2H2.1Z"/><path d="M10.8 7.3L7.9 9.5V5.1Z"/><path d="M0 11.8L0.5 8.1L3.7 11.3Z"/></g></svg>
<div class="t k" style="left:96px;top:88.3px;color:#222">매장구군*</div>
<div class="ab" style="left:143.3px;top:87.9px;width:28px;height:12.4px;background:#d3b5ee;border-radius:2px 0 0 2px"></div>
<div class="t" style="left:147.4px;top:87.0px;color:#222;font-size:11px">=</div>
<svg class="ab" style="left:160.6px;top:93.3px" width="6.4" height="3.5" viewBox="0 0 6.4 3.5"><path fill="#222" d="M0 0H6.4L3.2 3.5Z"/></svg>
<div class="ab inp" style="left:171px;top:88.1px;width:69.6px;height:14.8px;border-color:#9fb0c8;border-radius:1px"></div>
<div class="t" style="left:172.2px;top:87.7px;color:#222;font-size:10.5px"><span style="letter-spacing:-0.7px">@:VS_GUGUN</span></div>
<svg class="ab" style="left:244.8px;top:93.3px" width="6.5" height="3.6" viewBox="0 0 6.5 3.6"><path fill="#222" d="M0 0H6.5L3.25 3.6Z"/></svg>
<svg class="ab" style="left:259.6px;top:88.1px" width="13.6" height="13.6" viewBox="0 0 14 14"><path fill="#707070" fill-rule="evenodd" d="M6.07 0.06L7.93 0.06L8.07 2.01L9.77 2.72L11.25 1.44L12.56 2.75L11.28 4.23L11.99 5.93L13.94 6.07L13.94 7.93L11.99 8.07L11.28 9.77L12.56 11.25L11.25 12.56L9.77 11.28L8.07 11.99L7.93 13.94L6.07 13.94L5.93 11.99L4.23 11.28L2.75 12.56L1.44 11.25L2.72 9.77L2.01 8.07L0.06 7.93L0.06 6.07L2.01 5.93L2.72 4.23L1.44 2.75L2.75 1.44L4.23 2.72L5.93 2.01ZM4.10 7.00a2.9 2.9 0 1 0 5.8 0a2.9 2.9 0 1 0 -5.8 0Z"/></svg>
</div>
<div class="btn bg" style="left:9px;top:487.8px;width:52.5px">쿼리</div>
<div class="btn bb" style="left:650.3px;top:487.8px;width:53.2px">저장</div>
<div class="btn bb" style="left:723px;top:487.8px;width:53.2px">확인</div>
<div class="btn bg" style="left:781.2px;top:487.8px;width:52.8px">닫기</div>
<svg class="ab" style="left:833.4px;top:508px" width="5.8" height="5.8" viewBox="0 0 8 8"><path d="M8 0V8H0Z" fill="#a8a8a8"/></svg>
</div></body></html>
